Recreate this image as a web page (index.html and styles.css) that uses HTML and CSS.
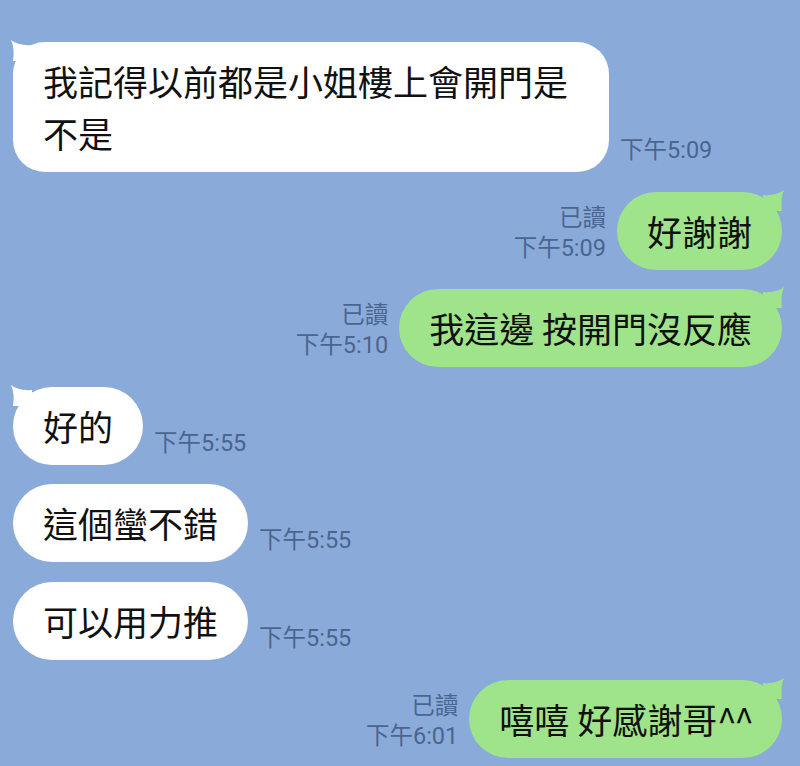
FILE: index.html
```html
<!DOCTYPE html>
<html lang="zh-Hant">
<head>
    <meta charset="UTF-8">
    <meta name="viewport" content="width=device-width, initial-scale=1.0">
    <title>LINE 聊天</title>
    <link rel="stylesheet" href="styles.css">
</head>
<body>

<div class="chat">

    <!-- 對方 -->
    <div class="row in">
        <div class="bubble tall has-tail">
            <svg class="tail" viewBox="0 0 22 22"><path d="M1 1 Q8 7 22 6 L22 22 L3 22 Q5 10 1 1 Z"/></svg>
            我記得以前都是小姐樓上會開門是不是
        </div>
        <div class="meta"><span>下午5:09</span></div>
    </div>

    <!-- 自己 -->
    <div class="row out">
        <div class="meta"><span>已讀</span><span>下午5:09</span></div>
        <div class="bubble mine has-tail">
            <svg class="tail" viewBox="0 0 22 22"><path d="M21 1 Q14 7 0 6 L0 22 L19 22 Q17 10 21 1 Z"/></svg>
            好謝謝
        </div>
    </div>

    <div class="row out">
        <div class="meta"><span>已讀</span><span>下午5:10</span></div>
        <div class="bubble mine has-tail">
            <svg class="tail" viewBox="0 0 22 22"><path d="M21 1 Q14 7 0 6 L0 22 L19 22 Q17 10 21 1 Z"/></svg>
            我這邊 按開門沒反應
        </div>
    </div>

    <div class="row in">
        <div class="bubble has-tail">
            <svg class="tail" viewBox="0 0 22 22"><path d="M1 1 Q8 7 22 6 L22 22 L3 22 Q5 10 1 1 Z"/></svg>
            好的
        </div>
        <div class="meta"><span>下午5:55</span></div>
    </div>

    <div class="row in">
        <div class="bubble">這個蠻不錯</div>
        <div class="meta"><span>下午5:55</span></div>
    </div>

    <div class="row in">
        <div class="bubble">可以用力推</div>
        <div class="meta"><span>下午5:55</span></div>
    </div>

    <div class="row out">
        <div class="meta"><span>已讀</span><span>下午6:01</span></div>
        <div class="bubble mine has-tail">
            <svg class="tail" viewBox="0 0 22 22"><path d="M21 1 Q14 7 0 6 L0 22 L19 22 Q17 10 21 1 Z"/></svg>
            嘻嘻 好感謝哥<span class="caret">^^</span>
        </div>
    </div>

</div>

</body>
</html>
```

FILE: styles.css
```css
html, body {
    margin: 0;
    padding: 0;
}

body {
    background-color: #8aabd9;
    font-family: "Noto Sans CJK TC", "Noto Sans", sans-serif;
    height: 766px;
    overflow: hidden;
}

.chat {
    display: flex;
    flex-direction: column;
    gap: 19.6px;
    padding: 42px 18px 0 13px;
}

.row {
    display: flex;
    align-items: flex-end;
    gap: 11px;
}

.row.out {
    justify-content: flex-end;
}

.bubble {
    position: relative;
    background-color: #fff;
    color: #111;
    font-size: 35px;
    line-height: 52px;
    padding: 13px 30px;
    border-radius: 39px;
    max-width: 596px;
    box-sizing: border-box;
}

.bubble.tall {
    border-radius: 32px;
}

.bubble.mine {
    background-color: #9fe38b;
}

.caret {
    letter-spacing: -2px;
}

.tail {
    position: absolute;
    top: -3px;
    left: -3px;
    width: 22px;
    height: 22px;
    fill: #fff;
}

.mine .tail {
    left: auto;
    right: -3px;
    fill: #9fe38b;
}

.meta {
    display: flex;
    flex-direction: column;
    padding-bottom: 7px;
    font-family: Roboto, "Noto Sans CJK TC", sans-serif;
    font-size: 23.5px;
    line-height: 30px;
    color: #4a6590;
    white-space: nowrap;
}

.out .meta {
    align-items: flex-end;
}
```
